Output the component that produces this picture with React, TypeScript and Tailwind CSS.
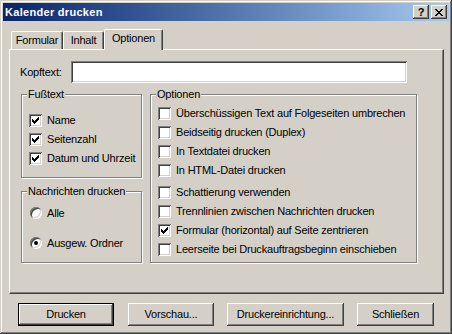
const sunken =
  "shadow-[inset_1px_1px_#808080,inset_-1px_-1px_#ffffff,inset_2px_2px_#404040,inset_-2px_-2px_#d4d0c8]";
const raised =
  "shadow-[inset_-1px_-1px_#404040,inset_1px_1px_#ffffff,inset_-2px_-2px_#808080,inset_2px_2px_#d4d0c8]";
const etched = "border border-[#808080] shadow-[inset_1px_1px_#ffffff,1px_1px_#ffffff]";

function Check({ on }: { on?: boolean }) {
  return (
    <span className={`flex w-[13px] h-[13px] shrink-0 bg-white ${sunken}`}>
      {on && (
        <svg width="13" height="13" viewBox="0 0 13 13" shapeRendering="crispEdges">
          <path
            fill="#000"
            d="M3 5h1v3h-1z M4 6h1v3h-1z M5 7h1v3h-1z M6 6h1v3h-1z M7 5h1v3h-1z M8 4h1v3h-1z M9 3h1v3h-1z"
          />
        </svg>
      )}
    </span>
  );
}

function Radio({ on }: { on?: boolean }) {
  return (
    <span
      className={`flex items-center justify-center w-[12px] h-[12px] shrink-0 rounded-full bg-white ${sunken}`}
    >
      {on && <span className="w-[4px] h-[4px] rounded-full bg-black" />}
    </span>
  );
}

function CheckRow({ label, on }: { label: string; on?: boolean }) {
  return (
    <div className="flex items-center gap-[5px] h-[13px]">
      <Check on={on} />
      <span className="whitespace-nowrap">{label}</span>
    </div>
  );
}

function RadioRow({ label, on }: { label: string; on?: boolean }) {
  return (
    <div className="flex items-center gap-[5px] h-[12px]">
      <Radio on={on} />
      <span className="whitespace-nowrap">{label}</span>
    </div>
  );
}

function Group({ title, className, children }: { title: string; className: string; children: React.ReactNode }) {
  return (
    <div className={`relative ${etched} ${className}`}>
      <span className="absolute left-[5px] -top-[7px] px-[1px] leading-[13px] bg-[#d4d0c8] whitespace-nowrap">
        {title}
      </span>
      {children}
    </div>
  );
}

function Button({ label, w, primary }: { label: string; w: string; primary?: boolean }) {
  return (
    <button
      className={`h-[23px] ${w} bg-[#d4d0c8] flex items-center justify-center ${
        primary
          ? "border border-black shadow-[inset_-1px_-1px_#404040,inset_1px_1px_#ffffff,inset_-2px_-2px_#808080]"
          : raised
      }`}
    >
      {label}
    </button>
  );
}

const options = [
  { label: "Überschüssigen Text auf Folgeseiten umbrechen" },
  { label: "Beidseitig drucken (Duplex)" },
  { label: "In Textdatei drucken" },
  { label: "In HTML-Datei drucken" },
];
const options2 = [
  { label: "Schattierung verwenden" },
  { label: "Trennlinien zwischen Nachrichten drucken" },
  { label: "Formular (horizontal) auf Seite zentrieren", on: true },
  { label: "Leerseite bei Druckauftragsbeginn einschieben" },
];

export default function App() {
  return (
    <div
      className={`w-[452px] h-[334px] p-[3px] bg-[#d4d0c8] text-black text-[11px] leading-[13px] tracking-[-0.2px] font-['Liberation_Sans',Arial,sans-serif] shadow-[inset_-1px_-1px_#404040,inset_1px_1px_#d4d0c8,inset_-2px_-2px_#808080,inset_2px_2px_#ffffff]`}
    >
      {/* title bar */}
      <div className="h-[18px] flex items-center justify-between pl-[2px] pr-[2px] bg-linear-to-r from-[#0a246a] to-[#a6caf0]">
        <span className="text-white font-bold tracking-[0.3px]">Kalender drucken</span>
        <div className="flex gap-[2px]">
          <div className={`w-[16px] h-[14px] bg-[#d4d0c8] flex items-center justify-center font-bold text-[11px] tracking-normal ${raised}`}>
            ?
          </div>
          <div className={`w-[16px] h-[14px] bg-[#d4d0c8] flex items-center justify-center ${raised}`}>
            <svg width="8" height="7" viewBox="0 0 8 7" shapeRendering="crispEdges">
              <path
                fill="#000"
                d="M0 0h2v1h-2z M6 0h2v1h-2z M1 1h2v1h-2z M5 1h2v1h-2z M2 2h4v1h-4z M3 3h2v1h-2z M2 4h4v1h-4z M1 5h2v1h-2z M5 5h2v1h-2z M0 6h2v1h-2z M6 6h2v1h-2z"
              />
            </svg>
          </div>
        </div>
      </div>

      <div className="pt-[8px] pl-[6px]">
        {/* tabs */}
        <div className="flex items-end h-[20px] pl-[2px]">
          <div className="w-[52px] h-[18px] flex items-center justify-center border-t border-l border-white border-r border-r-[#404040] rounded-tl-[2px] rounded-tr-[2px] shadow-[inset_-1px_0_#808080]">
            Formular
          </div>
          <div className="w-[41px] h-[18px] flex items-center justify-center border-t border-l border-white border-r border-r-[#404040] rounded-tl-[2px] rounded-tr-[2px] shadow-[inset_-1px_0_#808080]">
            Inhalt
          </div>
          <div className="relative z-10 -mb-px w-[59px] h-[21px] pb-[3px] flex items-center justify-center bg-[#d4d0c8] border-t border-l border-white border-r border-r-[#404040] rounded-tl-[2px] rounded-tr-[2px] shadow-[inset_-1px_0_#808080]">
            Optionen
          </div>
        </div>

        {/* panel */}
        <div className="w-[435px] h-[245px] pt-[11px] pl-[10px] border border-white border-r-[#404040] border-b-[#404040] shadow-[inset_-1px_-1px_#808080]">
          <div className="flex items-center">
            <span className="w-[51px]">Kopftext:</span>
            <div className={`w-[336px] h-[22px] bg-white ${sunken}`} />
          </div>

          <div className="flex gap-[8px] mt-[11px] ml-[1px]">
            <div className="flex flex-col gap-[13px]">
              <Group title="Fußtext" className="w-[121px] h-[84px] pt-[19px] pl-[7px]">
                <div className="flex flex-col gap-[6px]">
                  <CheckRow label="Name" on />
                  <CheckRow label="Seitenzahl" on />
                  <CheckRow label="Datum und Uhrzeit" on />
                </div>
              </Group>
              <Group title="Nachrichten drucken" className="w-[121px] h-[72px] pt-[15px] pl-[8px]">
                <div className="flex flex-col gap-[18px]">
                  <RadioRow label="Alle" />
                  <RadioRow label="Ausgew. Ordner" on />
                </div>
              </Group>
            </div>

            <Group title="Optionen" className="w-[267px] h-[169px] pt-[12px] pl-[7px]">
              <div className="flex flex-col gap-[6px]">
                {options.map((o) => (
                  <CheckRow key={o.label} label={o.label} />
                ))}
              </div>
              <div className="flex flex-col gap-[6px] mt-[9px]">
                {options2.map((o) => (
                  <CheckRow key={o.label} label={o.label} on={o.on} />
                ))}
              </div>
            </Group>
          </div>
        </div>

        {/* buttons */}
        <div className="flex mt-[9px] ml-[9px] gap-[14px]">
          <Button label="Drucken" w="w-[96px]" primary />
          <div className="flex gap-[13px]">
            <Button label="Vorschau..." w="w-[86px]" />
            <Button label="Druckereinrichtung..." w="w-[117px]" />
            <Button label="Schließen" w="w-[77px]" />
          </div>
        </div>
      </div>
    </div>
  );
}
